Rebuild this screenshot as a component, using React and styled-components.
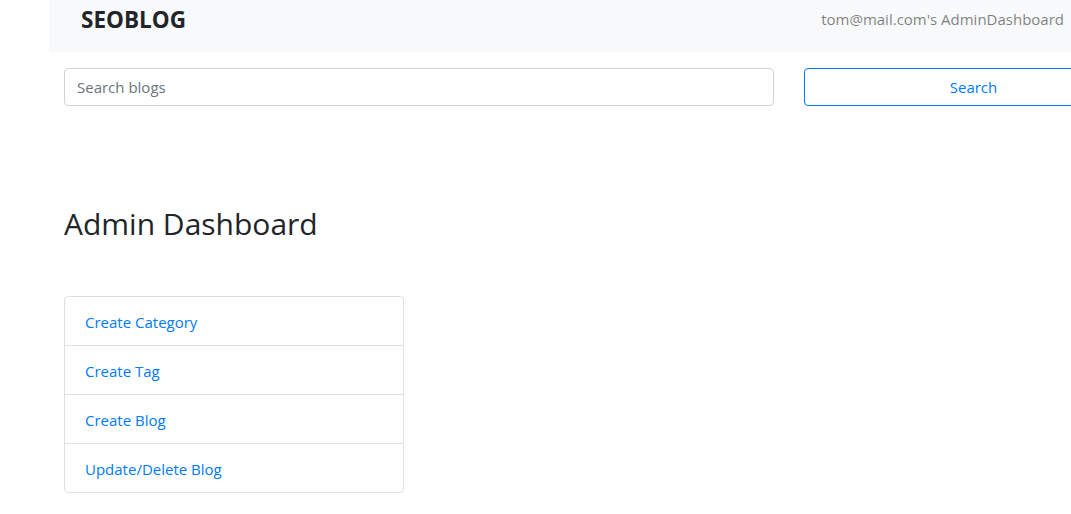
import React from 'react';
import styled, { createGlobalStyle } from 'styled-components';

const GlobalStyle = createGlobalStyle`
	html, body {
		margin: 0;
		padding: 0;
		background: #fff;
		overflow: hidden;
	}
	body {
		font-family: "Segoe UI", "Open Sans", "Noto Sans", sans-serif;
		font-size: 15px;
		color: #212529;
	}
	* { box-sizing: border-box; }
`;

const links = ['Create Category', 'Create Tag', 'Create Blog', 'Update/Delete Blog'];

const App = () => {
	return (
		<>
			<GlobalStyle />
			<Page>
				<Navbar>
					<Brand>SEOBLOG</Brand>
					<UserLink>tom@mail.com's AdminDashboard</UserLink>
				</Navbar>
				<Container>
					<SearchForm onSubmit={(e) => e.preventDefault()}>
						<SearchInput type="search" placeholder="Search blogs" />
						<SearchButton type="submit">Search</SearchButton>
					</SearchForm>
					<Title>Admin Dashboard</Title>
					<ListGroup>
						{links.map((label) => (
							<ListItem key={label}>
								<ItemLink href="#">{label}</ItemLink>
							</ListItem>
						))}
					</ListGroup>
				</Container>
			</Page>
		</>
	);
};
export default App;

const Page = styled.div`
	padding-left: 49px;
	width: 100vw;
	min-height: 100vh;
`;

const Navbar = styled.nav`
	height: 52px;
	background: #f8f9fa;
	display: flex;
	align-items: center;
	justify-content: space-between;
	padding: 0 7px 14px 32px;
`;

const Brand = styled.a`
	font-size: 22.5px;
	font-weight: 700;
	color: #212529;
	margin-top: 1px;
`;

const UserLink = styled.a`
	font-size: 15px;
	color: rgba(0, 0, 0, 0.5);
`;

const Container = styled.div`
	width: 1108px;
	padding: 16px 15px 0;
`;

const SearchForm = styled.form`
	display: grid;
	grid-template-columns: 710px 339px;
	column-gap: 30px;
`;

const SearchInput = styled.input`
	height: 38px;
	padding: 6px 12px;
	font: inherit;
	color: #495057;
	border: 1px solid #ced4da;
	border-radius: 4px;
	outline: none;
	&::placeholder { color: #6c757d; }
`;

const SearchButton = styled.button`
	height: 38px;
	font: inherit;
	color: #007bff;
	background: transparent;
	border: 1px solid #007bff;
	border-radius: 4px;
	cursor: pointer;
`;

const Title = styled.h2`
	margin: 99px 0 54px;
	font-size: 30px;
	font-weight: 400;
	line-height: 37px;
	color: #212529;
`;

const ListGroup = styled.ul`
	list-style: none;
	margin: 0;
	padding: 0;
	width: 340px;
	border: 1px solid rgba(0, 0, 0, 0.125);
	border-radius: 4px;
`;

const ListItem = styled.li`
	padding: 13px 20px 11px;
	line-height: 24px;
	& + & { border-top: 1px solid rgba(0, 0, 0, 0.125); }
`;

const ItemLink = styled.a`
	color: #007bff;
	text-decoration: none;
`;
